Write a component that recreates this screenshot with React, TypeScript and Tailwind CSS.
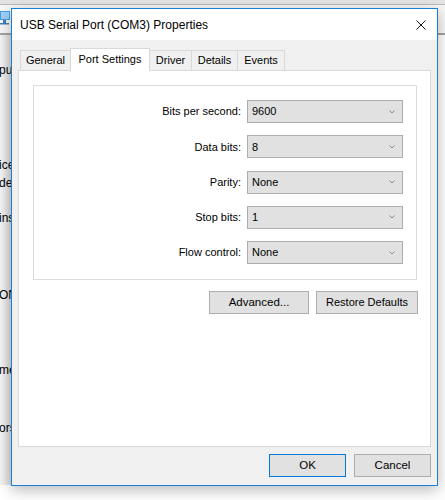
import React from "react";

const rows = [
  { label: "Bits per second:", value: "9600" },
  { label: "Data bits:", value: "8" },
  { label: "Parity:", value: "None" },
  { label: "Stop bits:", value: "1" },
  { label: "Flow control:", value: "None" },
];

// words of the window behind the dialog; the dialog covers their ends
const behind = [
  { text: "puter", mt: "mt-[26px]" },
  { text: "ices", mt: "mt-[77px]" },
  { text: "ders", mt: "mt-0" },
  { text: "ins", mt: "mt-[17px]" },
  { text: "ON", mt: "mt-[59px]" },
  { text: "mes", mt: "mt-[57px]" },
  { text: "ors", mt: "mt-[40px]" },
];

function Select({ value }: { value: string }) {
  return (
    <div className="w-[156px] h-[23px] bg-[#e1e1e1] border border-[#adadad] flex items-center justify-between pl-[4px] pr-[7px]">
      <span>{value}</span>
      <svg width="6" height="4" viewBox="0 0 6 4">
        <path d="M0.5 0.5 L3 3 L5.5 0.5" stroke="#8a8a8a" strokeWidth="1" fill="none" />
      </svg>
    </div>
  );
}

function Tab({ label, active, w }: { label: string; active?: boolean; w: string }) {
  if (active) {
    return (
      <div className={`${w} h-[23px] -ml-px relative z-10 bg-white border border-b-0 border-[#d9d9d9] flex items-center justify-center pb-[2px]`}>
        {label}
      </div>
    );
  }
  return (
    <div className={`${w} h-[21px] -ml-px first:ml-0 bg-[#f0f0f0] border border-[#d9d9d9] flex items-center justify-center`}>
      {label}
    </div>
  );
}

export default function App() {
  return (
    <div
      className="relative w-[445px] h-[500px] overflow-hidden bg-white text-[11px] text-black"
      style={{ fontFamily: '"Liberation Sans", Arial, sans-serif' }}
    >
      {/* window behind */}
      <div className="h-[5px] bg-[#e4e4e4] border-b border-[#bcbcbc]" />
      <div className="h-[28px] bg-[#f7f7f7] pt-[5px]">
        <svg width="10" height="16" viewBox="0 0 10 16">
          <rect x="0" y="1" width="10" height="9" fill="#4a9ee0" />
          <rect x="1" y="2" width="8" height="7" fill="#9fd2f7" />
          <rect x="3" y="10" width="3" height="3" fill="#3f7fb8" />
          <rect x="0" y="13" width="9" height="1.5" fill="#3f7fb8" />
        </svg>
      </div>
      <div className="h-[2px] bg-[#a3a3a3]" />
      <div className="w-[60px] h-[450px] bg-[linear-gradient(to_right,#f6f6f6_0px,#dcdcdc_11px,#dcdcdc_100%)] flex flex-col text-[12px]">
        {behind.map((b) => (
          <div key={b.text} className={`${b.mt} h-[18px] whitespace-nowrap leading-[18px] -ml-px`}>
            {b.text}
          </div>
        ))}
      </div>

      {/* dialog */}
      <div className="absolute left-[11px] top-[8px] w-[427px] h-[478px] border border-[#1a7fd6] bg-[#f0f0f0] shadow-[0_4px_14px_rgba(0,0,0,0.28)] flex flex-col z-20">
        <div className="h-[31px] bg-white flex items-center justify-between pl-[8px] pr-[11px] shrink-0">
          <span className="text-[12px]">USB Serial Port (COM3) Properties</span>
          <svg width="10" height="10" viewBox="0 0 10 10">
            <path d="M0.5 0.5 L9.5 9.5 M9.5 0.5 L0.5 9.5" stroke="#111" strokeWidth="1" />
          </svg>
        </div>

        <div className="flex-1 flex flex-col px-[6px] pt-[8px]">
          <div className="flex items-end pl-[2px] -mb-px relative z-10">
            <Tab label="General" w="w-[51px]" />
            <Tab label="Port Settings" w="w-[80px]" active />
            <Tab label="Driver" w="w-[43px]" />
            <Tab label="Details" w="w-[47px]" />
            <Tab label="Events" w="w-[48px]" />
          </div>

          <div className="h-[377px] bg-white border border-[#d9d9d9] pt-[14px] pl-[14px] pr-[13px]">
            <div className="border border-[#dcdcdc] pt-[14px] pb-[15px] pr-[13px] flex flex-col gap-[12.25px]">
              {rows.map((r) => (
                <div key={r.label} className="flex items-center justify-end gap-[6px]">
                  <span>{r.label}</span>
                  <Select value={r.value} />
                </div>
              ))}
            </div>
            <div className="flex justify-end gap-[7px] mt-[11px] -mr-px">
              <button className="w-[100px] h-[23px] bg-[#e1e1e1] border border-[#adadad] text-[11.5px]">Advanced...</button>
              <button className="w-[102px] h-[23px] bg-[#e1e1e1] border border-[#adadad]">Restore Defaults</button>
            </div>
          </div>

          <div className="flex justify-end gap-[8px] mt-[7px]">
            <button className="w-[77px] h-[23px] bg-[#e1e1e1] border border-[#0078d7] text-[11.5px]">OK</button>
            <button className="w-[77px] h-[23px] bg-[#e1e1e1] border border-[#adadad] text-[11.5px]">Cancel</button>
          </div>
        </div>
      </div>
    </div>
  );
}
